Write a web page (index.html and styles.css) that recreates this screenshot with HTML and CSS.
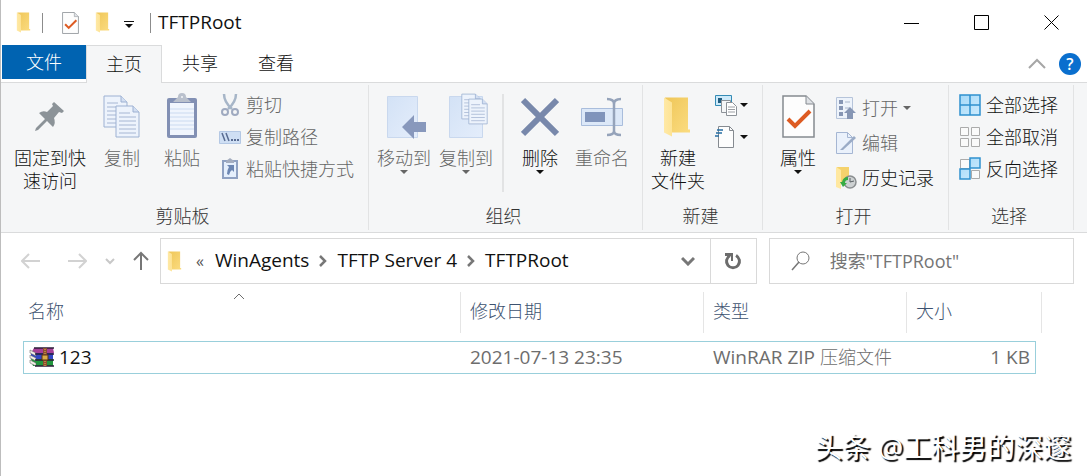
FILE: index.html
```html
<!DOCTYPE html>
<html lang="zh-CN">
<head>
	<meta charset="UTF-8">
	<title>TFTPRoot</title>
	<link rel="stylesheet" href="styles.css">
</head>
<body>
	<!-- 公用图标 -->
	<svg class="defs" width="0" height="0" aria-hidden="true">
		<defs>
			<linearGradient id="gold" x1="0" x2="1" y1="0" y2="1"><stop offset="0" stop-color="#efc658"/><stop offset="1" stop-color="#fbdc80"/></linearGradient>
			<linearGradient id="flap" x1="0" x2="1"><stop offset="0" stop-color="#ffe9a6"/><stop offset="1" stop-color="#fde395"/></linearGradient>
			<linearGradient id="pale" x1="0" x2="1" y1="0" y2="1"><stop offset="0" stop-color="#d3e2f6"/><stop offset="1" stop-color="#e4edfb"/></linearGradient>
			<linearGradient id="tile" x1="0" x2="1" y1="0" y2="1"><stop offset="0" stop-color="#a5d9f8"/><stop offset="1" stop-color="#cdebfd"/></linearGradient>
		</defs>
		<symbol id="folder" viewBox="0 0 28 41">
			<path d="M2 1h23v32h2v3H9z" fill="url(#gold)"/>
			<path d="M1 1l8 5v34L1 36z" fill="url(#flap)"/>
		</symbol>
		<symbol id="check" viewBox="0 0 33 43">
			<path d="M1 1h23l8 8v33H1z" fill="#fdfdfd" stroke="#858a90" stroke-width="1.5"/>
			<path d="M24 1v8h8" fill="#dfe2e6" stroke="#858a90"/>
			<path d="M6 24l7 7 15-15" fill="none" stroke="#dd5b22" stroke-width="4"/>
		</symbol>
		<symbol id="sheet" viewBox="0 0 25 33">
			<path d="M1 1h17l6 6v25H1z" fill="#edf3fc" stroke="#9db1d2"/>
			<path d="M18 1v6h6" fill="#d3dff2" stroke="#9db1d2"/>
			<path d="M4 8h11M4 12h17M4 16h17M4 20h17M4 24h17M4 28h17" stroke="#a6b6d3"/>
		</symbol>
		<symbol id="caret" viewBox="0 0 8 4"><path d="M0 0h8L4 4z" fill="currentColor"/></symbol>
		<symbol id="next" viewBox="0 0 8 12"><path d="M1 1l5 5-5 5" fill="none" stroke="#777" stroke-width="2.5"/></symbol>
	</svg>

	<div class="window">
		<header class="titlebar">
			<div class="quick">
				<svg class="mini-folder" width="15" height="21"><use href="#folder"/></svg>
				<i class="bar"></i>
				<button class="quick-check" aria-label="属性"><svg width="17" height="22"><use href="#check"/></svg></button>
				<button class="quick-folder" aria-label="新建文件夹"><svg width="15" height="21"><use href="#folder"/></svg></button>
				<button class="quick-more" aria-label="自定义快速访问工具栏"><svg width="10" height="8"><path d="M0 .5h10" stroke="#111"/><path d="M1 3h8L5 7z" fill="#111"/></svg></button>
				<i class="bar"></i>
			</div>
			<h1 class="title">TFTPRoot</h1>
			<div class="controls">
				<button aria-label="最小化"><svg width="16" height="16"><path d="M0 8.5h15" stroke="#000"/></svg></button>
				<button aria-label="最大化"><svg width="16" height="16"><path d="M.5.5h14v14H.5z" fill="none" stroke="#000"/></svg></button>
				<button aria-label="关闭"><svg width="16" height="16"><path d="M.5.5l14 14M14.5.5l-14 14" stroke="#000"/></svg></button>
			</div>
		</header>

		<nav class="tabs">
			<button class="tab file">文件</button>
			<button class="tab active">主页</button>
			<button class="tab">共享</button>
			<button class="tab">查看</button>
			<div class="tabs-right">
				<button aria-label="折叠功能区"><svg width="18" height="12"><path d="M1 10l8-8 8 8" fill="none" stroke="#a6a6a6" stroke-width="2"/></svg></button>
				<button class="help" aria-label="帮助">?</button>
			</div>
		</nav>

		<section class="ribbon">
			<div class="group clipboard">
				<div class="group-body">
					<button class="big pin">
						<svg width="32" height="50"><path d="M20 10l10 9-2 2-3-1-5 6q2 5-1 9l-6-6-9 9-3 1 1-3 9-9-6-6q4-3 8-1l6-6-1-2z" fill="#8c9398"/></svg>
						<span>固定到快<br>速访问</span>
					</button>
					<button class="big off">
						<svg width="38" height="50"><use href="#sheet" x="0" y="3" width="25" height="33"/><use href="#sheet" x="12" y="13" width="25" height="33"/></svg>
						<span>复制</span>
					</button>
					<button class="big off">
						<svg width="34" height="50"><rect x="2" y="6" width="30" height="40" rx="2" fill="#8290b4"/><path d="M5 11h24v32H5z" fill="#f0f5fd"/><path d="M5 17h24M5 21h24M5 25h24M5 29h24M5 33h24M5 37h24" stroke="#cbdaf0"/><path d="M8 10l5-5a4 4 0 0 1 8 0l5 5z" fill="#b9c0cc"/><circle cx="17" cy="5" r="1" fill="#f4f6f8"/></svg>
						<span>粘贴</span>
					</button>
					<div class="smalls">
						<button class="small off"><svg width="22" height="24"><path d="M5 1q0 8 8 15M17 1q0 8-8 15" fill="none" stroke="#a7b6c8" stroke-width="2.5"/><circle cx="6" cy="19" r="3" fill="none" stroke="#9faac0" stroke-width="2"/><circle cx="16" cy="19" r="3" fill="none" stroke="#9faac0" stroke-width="2"/></svg>剪切</button>
						<button class="small off"><svg width="22" height="24"><path d="M.5 6.500h21v12H.5z" fill="#cfdff4" stroke="#b4c8e4"/><path d="M3 8l3 8M7 8l3 8" stroke="#596c92" stroke-width="1.500"/><path d="M12 15h2M15 15h2M18 15h2" stroke="#596c92" stroke-width="2"/></svg>复制路径</button>
						<button class="small off"><svg width="22" height="24"><path d="M4 4h14v17H4z" fill="#e5effc" stroke="#8fa1c2" stroke-width="2"/><path d="M7 4l4-3 4 3v2H7z" fill="#a4adbf"/><path d="M8 8h7v7l-2-2q-2 1-3 5l-2-1q0-4 2-7z" fill="#6c86b2"/></svg>粘贴快捷方式</button>
					</div>
				</div>
				<h2 class="group-name">剪贴板</h2>
			</div>

			<div class="group organize">
				<div class="group-body">
					<button class="big off">
						<svg width="44" height="50"><path d="M5.500 4.500h30v41h-30z" fill="url(#pale)" stroke="#c9d8ee"/><path d="M20 35l12-12v7h12v10H32v7z" fill="#8898bc"/></svg>
						<span>移动到</span>
						<svg class="caret" width="8" height="4"><use href="#caret"/></svg>
					</button>
					<button class="big off">
						<svg width="44" height="50"><path d="M5.500 4.500h33v41h-33z" fill="url(#pale)" stroke="#c9d8ee"/><use href="#sheet" x="17" y="1" width="20" height="27"/><use href="#sheet" x="24" y="6" width="20" height="27"/></svg>
						<span>复制到</span>
						<svg class="caret" width="8" height="4"><use href="#caret"/></svg>
					</button>
					<i class="divider"></i>
					<button class="big">
						<svg width="38" height="50"><path d="M2 8l34 34M36 8L2 42" stroke="#7888ab" stroke-width="6"/></svg>
						<span>删除</span>
						<svg class="caret" width="8" height="4"><use href="#caret"/></svg>
					</button>
					<button class="big off">
						<svg width="44" height="50"><path d="M1.500 16.500h41v17h-41z" fill="#dce8f8" stroke="#a9bddc"/><path d="M5 20h20v10H5z" fill="#8094bb"/><path d="M27 7q7 0 7 5v27q0 4-7 4M41 7q-7 0-7 5v27q0 4 7 4" fill="none" stroke="#95a3ba" stroke-width="2.500"/></svg>
						<span>重命名</span>
					</button>
				</div>
				<h2 class="group-name">组织</h2>
			</div>

			<div class="group new">
				<div class="group-body">
					<button class="big">
						<svg width="30" height="50"><use href="#folder" x="0" y="4" width="28" height="42"/></svg>
						<span>新建<br>文件夹</span>
					</button>
					<div class="smalls">
						<button class="small" aria-label="新建项目"><svg width="22" height="24"><path d="M.5 2.500h16v10H.5z" fill="#cdeafa" stroke="#348bb5"/><path d="M3 5h4v5H3z" fill="#235d80"/><path d="M6.500 7.500h9v12h-9z" fill="#f5f6f7" stroke="#8d9298"/><path d="M11.500 9.500h6l4 4v9h-10z" fill="#fff" stroke="#8d9298"/><path d="M13 14h7M13 16.500h7M13 19h7" stroke="#9c9fa4"/></svg><svg class="drop" width="8" height="4"><use href="#caret"/></svg></button>
						<button class="small" aria-label="轻松访问"><svg width="22" height="24"><path d="M3.500 1.500h11l4 4v17h-15z" fill="#fdfdfd" stroke="#858a90"/><path d="M14.500 1.500v4h4" fill="none" stroke="#858a90"/><path d="M2 5h6M1 8h6M0 11h4" stroke="#266da3" stroke-width="1.500"/></svg><svg class="drop" width="8" height="4"><use href="#caret"/></svg></button>
					</div>
				</div>
				<h2 class="group-name">新建</h2>
			</div>

			<div class="group open">
				<div class="group-body">
					<button class="big">
						<svg width="33" height="50"><use href="#check" x="0" y="3" width="33" height="43"/></svg>
						<span>属性</span>
						<svg class="caret" width="8" height="4"><use href="#caret"/></svg>
					</button>
					<div class="smalls loose">
						<button class="small off"><svg width="22" height="24"><path d="M1.500 1.500h16v21h-16z" fill="#edf3fb" stroke="#b6c4da"/><path d="M4 4h4v4H4zM4 10h4v4H4zM4 16h4v4H4z" fill="#8696b4"/><path d="M10 6h5M10 12h5" stroke="#a8b5ca"/><path d="M15 11l6 6h-3v6h-6v-6H9z" fill="#8696b4"/></svg>打开<svg class="drop" width="8" height="4"><use href="#caret"/></svg></button>
						<button class="small off"><svg width="22" height="24"><path d="M1.500 1.500h11l5 5v16h-16z" fill="#eaf1fb" stroke="#a5b6d3"/><path d="M12.500 1.500v5h5" fill="none" stroke="#a5b6d3"/><path d="M5 19L19 5l2 2L8 19z" fill="#9aabc6"/></svg>编辑</button>
						<button class="small"><svg width="22" height="24"><path d="M2 1h12v17H6z" fill="#f5d26c"/><path d="M1 1l5 3v19l-5-2z" fill="#ffe8a0"/><circle cx="15" cy="16" r="6" fill="#cdd1d2" stroke="#8a8e90" stroke-width="1.500"/><path d="M15 12v4l4-1" fill="none" stroke="#596064"/><path d="M7 16q1-5 6-5v3q-3 0-3 3h2l-4 4-3-5z" fill="#37ac43"/></svg>历史记录</button>
					</div>
				</div>
				<h2 class="group-name">打开</h2>
			</div>

			<div class="group select">
				<div class="group-body">
					<div class="smalls">
						<button class="small"><svg width="22" height="24"><path d="M1 2h10v10H1zM11 2h10v10H11zM1 12h10v10H1zM11 12h10v10H11z" fill="url(#tile)" stroke="#2f91cf" stroke-width="1.500"/></svg>全部选择</button>
						<button class="small"><svg width="22" height="24"><path d="M1.500 2.500h8v8h-8zM12.500 2.500h8v8h-8zM1.500 13.500h8v8h-8zM12.500 13.500h8v8h-8z" fill="#fafafa" stroke="#ababab"/></svg>全部取消</button>
						<button class="small"><svg width="22" height="24"><path d="M1.500 2.500h9v9h-9zM12.500 13.500h8v8h-8z" fill="#fafafa" stroke="#ababab"/><path d="M11 1h10v10H11zM1 12h10v10H1z" fill="url(#tile)" stroke="#2f91cf" stroke-width="1.500"/></svg>反向选择</button>
					</div>
				</div>
				<h2 class="group-name">选择</h2>
			</div>
		</section>

		<div class="location">
			<div class="nav">
				<button aria-label="后退"><svg width="20" height="16"><path d="M1 8h18M8 1L1 8l7 7" fill="none" stroke="#d2d2d2" stroke-width="2"/></svg></button>
				<button aria-label="前进"><svg width="20" height="16"><path d="M1 8h18M12 1l7 7-7 7" fill="none" stroke="#d2d2d2" stroke-width="2"/></svg></button>
				<button aria-label="最近浏览的位置"><svg width="10" height="7"><path d="M1 1l4 4 4-4" fill="none" stroke="#c8c8c8" stroke-width="2"/></svg></button>
				<button aria-label="上移"><svg width="16" height="20"><path d="M8 19V2M1 9l7-7 7 7" fill="none" stroke="#777" stroke-width="2"/></svg></button>
			</div>
			<div class="address">
				<svg class="address-icon" width="15" height="21"><use href="#folder"/></svg>
				<span class="more">«</span>
				<a href="#">WinAgents</a>
				<svg width="8" height="12"><use href="#next"/></svg>
				<a href="#">TFTP Server 4</a>
				<svg width="8" height="12"><use href="#next"/></svg>
				<a href="#">TFTPRoot</a>
				<button class="history" aria-label="以前的位置"><svg width="14" height="10"><path d="M1 2l6 6 6-6" fill="none" stroke="#777" stroke-width="3"/></svg></button>
				<button class="refresh" aria-label="刷新"><svg width="18" height="18"><path d="M12 3.500a6.500 6.500 0 1 1-6 0" fill="none" stroke="#6c6c6c" stroke-width="3"/><path d="M1 1h8v8H7V4H1z" fill="#6c6c6c"/></svg></button>
			</div>
			<label class="search">
				<svg width="20" height="20"><circle cx="12" cy="7" r="6" fill="none" stroke="#767676"/><path d="M8 11l-7 8" stroke="#767676" stroke-width="1.500"/></svg>
				<input type="search" aria-label="搜索" placeholder="搜索&quot;TFTPRoot&quot;">
			</label>
		</div>

		<main class="content">
			<table class="files">
				<colgroup><col><col class="col-date"><col class="col-type"><col class="col-size"><col class="col-end"></colgroup>
				<thead>
					<tr>
						<th class="by-name">名称<svg class="sort" width="12" height="7"><path d="M1 6l5-5 5 5" fill="none" stroke="#6d6d6d"/></svg></th>
						<th>修改日期</th>
						<th>类型</th>
						<th colspan="2">大小</th>
					</tr>
				</thead>
				<tbody>
					<tr>
						<td class="name"><div class="file-name"><svg width="26" height="20">
							<path d="M5 1h19l1 5H2z" fill="#a63f97"/><path d="M2 6h22v6H2z" fill="#3147c4"/><path d="M2 12h22v7H4z" fill="#22963d"/>
							<path d="M1 3l6 3v3L1 6zM1 8l6 3v3l-6-3zM1 13l6 3v3l-6-3z" fill="#f2eee8" stroke="#555" stroke-width=".5"/>
							<path d="M5 1h20M6 7h19M6 13h19M6 19h19" stroke="#2b1c39" stroke-width="1.500"/>
							<path d="M14 1h4v18h-4z" fill="#8c4e2f"/><path d="M13 8h6v5h-6z" fill="#d9ac49" stroke="#5d3516"/><path d="M16 2v5M16 14v5" stroke="#e2b95b" stroke-dasharray="1 1"/></svg>123</div></td>
						<td>2021-07-13 23:35</td>
						<td>WinRAR ZIP <span class="han">压缩文件</span></td>
						<td class="size">1 KB</td>
						<td class="end"></td>
					</tr>
				</tbody>
			</table>
		</main>
		<footer class="credit">头条 @工科男的深邃</footer>
	</div>
</body>
</html>
```
FILE: styles.css
```css
*{margin:0;padding:0;box-sizing:border-box;}
body{background:#fff;color:#111;font:300 18px/24px "Open Sans","Noto Sans CJK SC",sans-serif;}
button{border:0;background:none;color:inherit;font:inherit;}
a{color:inherit;text-decoration:none;}
svg{display:block;flex:none;}
.defs{position:absolute;}
.window{min-height:100vh;border-left:1px solid #bdbdbd;display:flex;flex-direction:column;}

/* 标题栏 */
.titlebar{display:flex;align-items:center;height:45px;}
.quick{display:flex;align-items:center;padding-left:15px;}
.bar{width:1px;height:20px;background:#8c8c8c;}
.mini-folder{margin-right:11px;}
.quick-check{margin-left:19px;}
.quick-folder{margin-left:16px;}
.quick-more{margin:4px 16px 0 14px;}
.title{flex:1;margin-left:7px;padding-bottom:2px;font-size:19px;font-weight:400;color:#111;}
.controls{display:flex;}
.controls button{width:70px;height:45px;display:flex;align-items:center;justify-content:center;}

/* 选项卡 */
.tabs{display:flex;height:38px;border-bottom:1px solid #dadbdc;padding-left:1px;}
.tab{padding:0 20px;height:36px;}
.tab.file{height:34px;padding:0 24px;background:#0063b1;color:#fff;}
.tab.active{height:38px;background:#f5f6f7;border:1px solid #dadbdc;border-bottom:0;padding:0 19px 2px;}
.tabs-right{display:flex;align-items:center;gap:13px;margin-left:auto;padding-right:6px;}
.help{width:22px;height:22px;border-radius:50%;background:#0a6fce;color:#fff;font-size:16px;line-height:22px;font-weight:600;}

/* 功能区 */
.ribbon{display:flex;height:150px;background:#f5f6f7;border-bottom:1px solid #dadbdc;}
.group{display:flex;flex-direction:column;border-right:1px solid #e2e3e4;flex:none;margin:2px 0;}
.clipboard{width:368px;}
.organize{width:274px;}
.new{width:120px;}
.open{width:186px;}
.select{width:125px;}
.group-body{display:flex;flex:1;padding-left:4px;}
.clipboard .group-body{padding-left:7px;}
.select .group-body{padding-left:10px;}
.group-name{font-size:18px;font-weight:300;text-align:center;line-height:24px;padding:0 4px 2px 0;color:#333;}
.big{width:62px;padding-top:7px;display:flex;flex-direction:column;align-items:center;line-height:23px;white-space:nowrap;}
.big span{margin-top:5px;}
.clipboard .big{width:60px;}
.clipboard .pin{width:84px;}
.off{color:#666;}
.smalls{display:flex;flex-direction:column;padding-top:4px;margin-left:7px;}
.select .smalls{margin-left:0;}
.small{display:flex;align-items:center;gap:5px;height:32px;white-space:nowrap;}
.new .smalls{margin-left:6px;}
.new .small{gap:3px;}
.loose{padding-top:5px;margin-left:6px;}
.loose .small{height:35px;}
.divider{width:2px;height:98px;margin:9px 5px 0;background:#e2e3e4;}

/* 地址栏 */
.location{display:flex;align-items:center;padding:5px 13px 0 20px;height:51px;}
.nav{display:flex;align-items:center;width:139px;}
.nav button:nth-child(2){margin-left:26px;}
.nav button:nth-child(3){margin-left:18px;}
.nav button:nth-child(4){margin-left:18px;}
.address{display:flex;align-items:center;flex:1;height:46px;border:1px solid #d9d9d9;color:#111;font-size:19px;font-weight:400;}
.address-icon{margin:0 14px 0 6px;}
.more{margin-right:11px;font-size:16px;color:#555;}
.address a{white-space:nowrap;padding-bottom:2px;}
.address a + svg{margin:0 10px;}
.history{margin-left:auto;padding:0 15px;}
.refresh{width:46px;height:44px;border-left:1px solid #d9d9d9;display:flex;align-items:center;justify-content:center;}
.search{display:flex;align-items:center;width:29%;height:46px;margin-left:12px;border:1px solid #d9d9d9;padding-left:21px;}
.search input{flex:1;min-width:0;margin-left:19px;border:0;outline:0;background:none;font:inherit;font-weight:400;}
.search input::placeholder{color:#757575;opacity:1;}

/* 文件列表 */
.content{padding:0 45px 0 22px;}
.files{width:100%;table-layout:fixed;border-spacing:0 8px;color:#6d6d6d;font-weight:400;}
.col-date{width:243px;}
.col-type{width:203px;}
.col-size{width:129px;}
.col-end{width:6px;}
.files th{height:41px;border-right:1px solid #e5e5e5;padding:0 0 3px 9px;text-align:left;font-weight:300;color:#3d5270;}
.files .by-name{position:relative;padding-left:5px;}
.sort{position:absolute;top:1px;left:50%;margin-left:-9px;}
.files td{height:33px;border:solid #99cfdb;border-width:1px 0;padding:0 0 2px 9px;font-size:19px;}
.files .name{border-left-width:1px;padding-left:5px;color:#111;}
.file-name{display:flex;align-items:center;gap:4px;}
.files .size{border-right-width:1px;text-align:right;padding-right:5px;}
.files .end{border:0;padding:0;}
.han{font-size:18px;font-weight:300;}

.credit{margin:auto 16px 9px auto;font-size:28px;line-height:40px;font-weight:400;color:#fff;text-shadow:2px 2px 1px #000;}
```
